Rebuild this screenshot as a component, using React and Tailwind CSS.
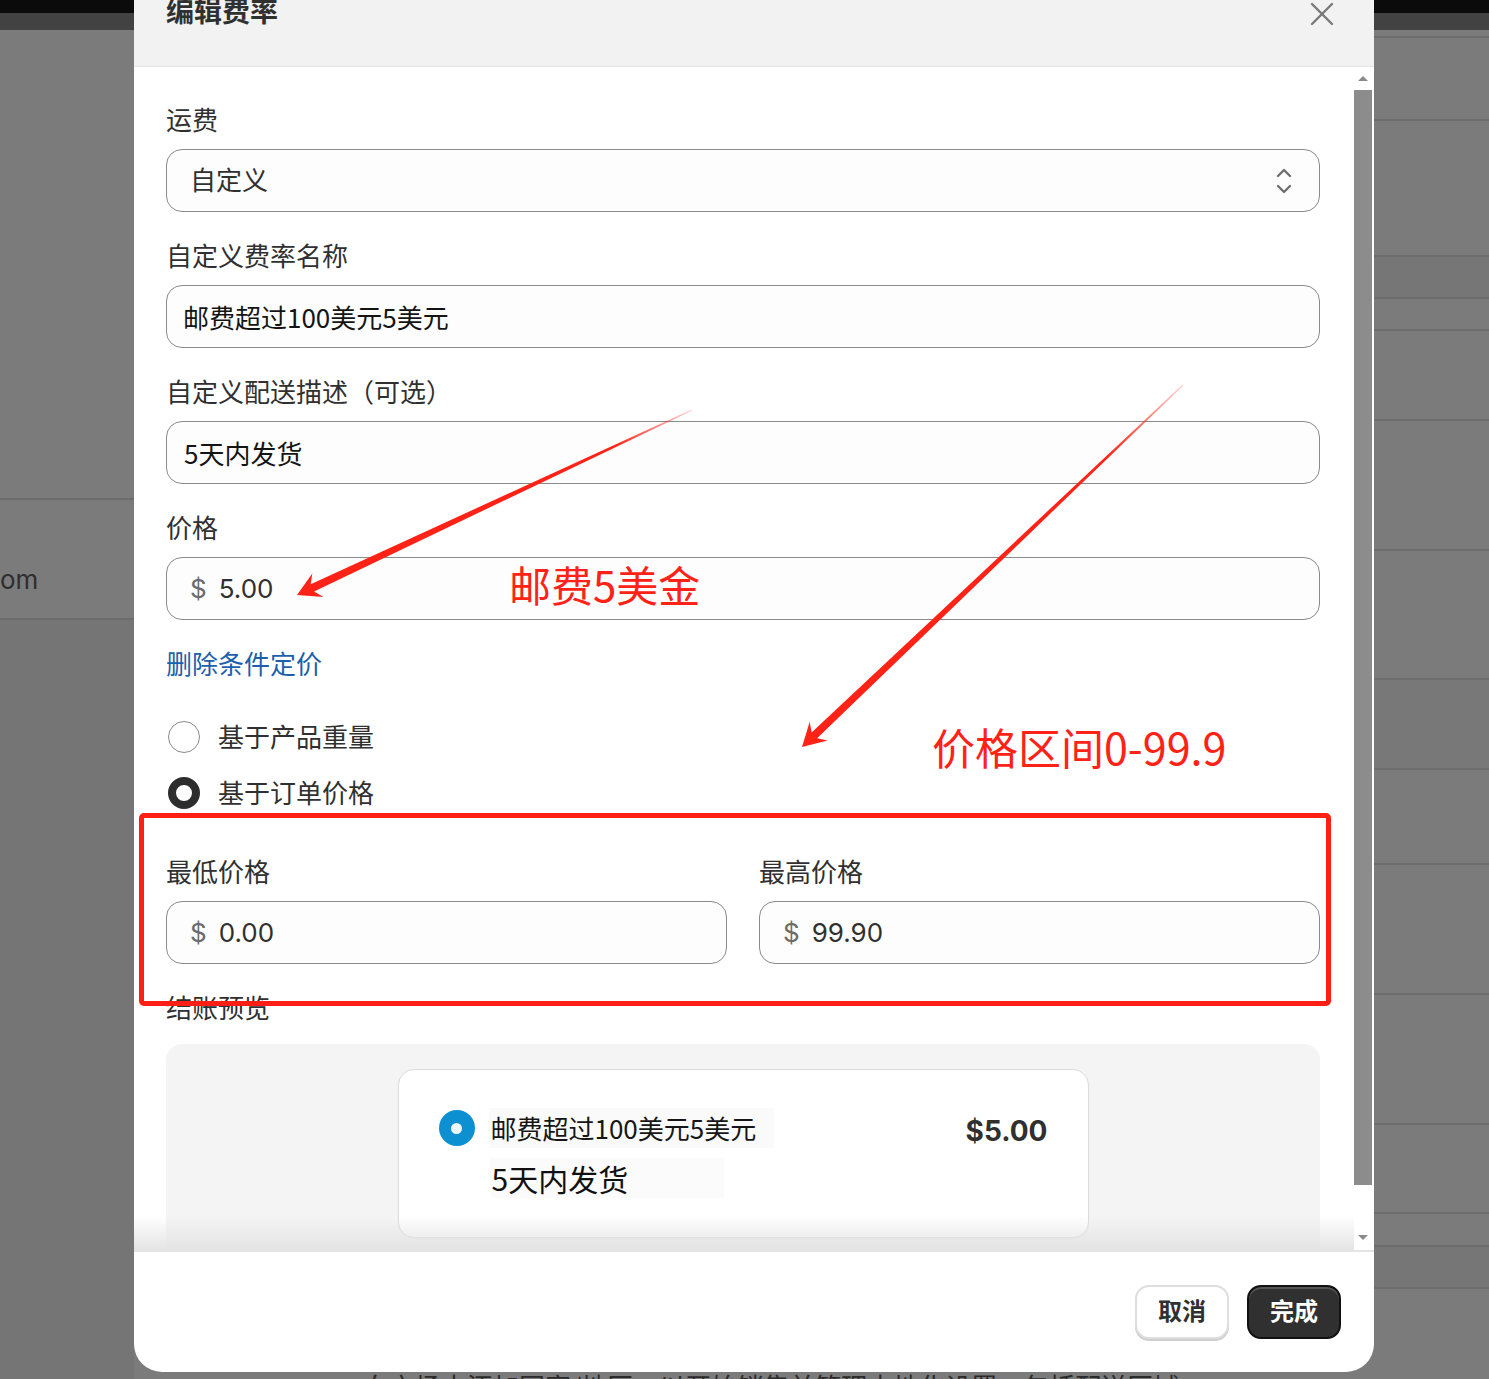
import React from 'react'

const UI = "font-['Inter','Noto_Sans_CJK_SC',sans-serif]"
const CJK = "font-['Noto_Sans_CJK_SC',sans-serif]"

// arrow outline: tip at (px,py), tail thin at (tx,ty)
function arrowPoints(tx, ty, px, py) {
  const dx = px - tx
  const dy = py - ty
  const len = Math.hypot(dx, dy)
  const ux = dx / len
  const uy = dy / len
  const nx = uy
  const ny = -ux
  const at = (a, w) => [px - ux * a + nx * w, py - uy * a + ny * w]
  const pts = [at(0, 0), at(23, 13), at(17, 4), at(len, 0.6), at(len, -0.6), at(17, -4), at(23, -13)]
  return pts.map((p) => p.map((v) => v.toFixed(1)).join(',')).join(' ')
}

const rightRows = [
  { h: 'h-[8px]', cls: '' },
  { h: 'h-[83px]', cls: '' },
  { h: 'h-[136px]', cls: '' },
  { h: 'h-[42px]', cls: 'bg-[#767676]' },
  { h: 'h-[32px]', cls: '' },
  { h: 'h-[90px]', cls: '' },
  { h: 'h-[130px]', cls: '' },
  { h: 'h-[129px]', cls: '' },
  { h: 'h-[90px]', cls: 'bg-[#787878]' },
  { h: 'h-[95px]', cls: '' },
  { h: 'h-[130px]', cls: '' },
  { h: 'h-[130px]', cls: '' },
  { h: 'h-[89px]', cls: '' },
  { h: 'h-[33px]', cls: '' },
  { h: 'h-[42px]', cls: 'bg-[#767676]' },
]

function Label({ children }) {
  return <div className="h-[36px] text-[26px] leading-[36px] text-[#303030]">{children}</div>
}

function Field({ children, className = '' }) {
  return (
    <div className={`mt-[10px] flex h-[63px] items-center rounded-[16px] border border-[#8a8a8a] bg-[#fdfdfd] ${className}`}>
      {children}
    </div>
  )
}

function Money({ value }) {
  return (
    <Field className="pl-[23px] text-[26px]">
      <span className="text-[#6b6b6b]">$</span>
      <span className="ml-[12px] text-[#303030]">{value}</span>
    </Field>
  )
}

function Modal() {
  return (
    <div className="absolute left-[134px] top-[-30px] flex w-[1240px] flex-col overflow-hidden rounded-b-[28px] bg-white">
      {/* header */}
      <div className="flex h-[97px] items-start justify-between border-b border-[#e3e3e3] bg-[#f2f2f2] pl-[32px] pr-[40px] pt-[24px]">
        <div className="text-[28px] font-bold leading-[36px] text-[#303030]">编辑费率</div>
        <svg className="mt-[8px]" width="24" height="24" viewBox="0 0 24 24" fill="none" stroke="#7a7a7a" strokeWidth="2.4" strokeLinecap="round">
          <path d="M2 2 22 22" />
          <path d="M22 2 2 22" />
        </svg>
      </div>

      {/* scroll body */}
      <div className="flex h-[1183px]">
        <div className="relative flex-1 overflow-hidden pl-[32px] pr-[34px] pt-[36px]">
          <Label>运费</Label>
          <Field className="justify-between pl-[23px] pr-[26px]">
            <span className="text-[26px] text-[#303030]">自定义</span>
            <svg width="18" height="28" viewBox="0 0 18 28" fill="none" stroke="#707070" strokeWidth="2.4" strokeLinecap="round" strokeLinejoin="round">
              <path d="M3 9 9 3 15 9" />
              <path d="M3 19 9 25 15 19" />
            </svg>
          </Field>

          <div className="mt-[27px]">
            <Label>自定义费率名称</Label>
          </div>
          <Field className="pl-[16px]">
            <span className={`${CJK} text-[26px] text-[#141414]`}>邮费超过100美元5美元</span>
          </Field>

          <div className="mt-[27px]">
            <Label>自定义配送描述（可选）</Label>
          </div>
          <Field className="pl-[17px]">
            <span className={`${CJK} text-[26px] text-[#141414]`}>5天内发货</span>
          </Field>

          <div className="mt-[27px]">
            <Label>价格</Label>
          </div>
          <Money value="5.00" />

          <div className="mt-[27px] h-[36px] text-[26px] leading-[36px] text-[#1d5fac]">删除条件定价</div>

          <div className="mt-[34px] flex h-[40px] items-center">
            <span className="ml-[2px] h-[32px] w-[32px] rounded-full border-[1.5px] border-[#8a8a8a] bg-white" />
            <span className="ml-[18px] text-[26px] text-[#303030]">基于产品重量</span>
          </div>
          <div className="mt-[16px] flex h-[40px] items-center">
            <span className="ml-[2px] h-[32px] w-[32px] rounded-full border-[8.5px] border-[#2d2d2d] bg-white" />
            <span className="ml-[18px] text-[26px] text-[#303030]">基于订单价格</span>
          </div>

          <div className="mt-[42px] grid grid-cols-2 gap-x-[32px]">
            <div>
              <Label>最低价格</Label>
              <Money value="0.00" />
            </div>
            <div>
              <Label>最高价格</Label>
              <Money value="99.90" />
            </div>
          </div>

          <div className="mt-[27px]">
            <Label>结账预览</Label>
          </div>

          <div className="mt-[17px] flex h-[400px] justify-center rounded-t-[16px] bg-[#f4f4f4] pt-[25px]">
            <div className="h-[169px] w-[691px] rounded-[16px] border border-[#dcdcdc] bg-white pl-[40px] pr-[40px] pt-[38px] shadow-[0_1px_2px_rgba(0,0,0,0.05)]">
              <div className="flex h-[40px] items-center">
                <span className="flex h-[36px] w-[36px] items-center justify-center rounded-full bg-[#0c90d2]">
                  <span className="h-[11px] w-[11px] rounded-full bg-[#eef6fb]" />
                </span>
                <span className={`${CJK} ml-[14px] bg-[#fafafa] px-[2px] pr-[18px] text-[26px] leading-[40px] text-[#161616]`}>邮费超过100美元5美元</span>
                <span className="ml-auto mt-[5px] text-[28px] font-bold text-[#303030]">$5.00</span>
              </div>
              <div className="mt-[10px] flex h-[40px] items-center pl-[51px]">
                <span className={`${CJK} bg-[#fbfbfb] px-[2px] pr-[96px] text-[30px] leading-[40px] text-[#111111]`}>5天内发货</span>
              </div>
            </div>
          </div>

          <div className="absolute bottom-0 left-0 right-0 h-[34px] bg-linear-to-b from-white/0 to-[#e4e4e4]" />
        </div>

        {/* scrollbar */}
        <div className="mr-[2px] flex w-[18px] flex-col items-center">
          <div className="flex h-[23px] w-full items-center justify-center">
            <span className="h-0 w-0 border-x-[5px] border-b-[5px] border-x-transparent border-b-[#8a8a8a]" />
          </div>
          <div className="h-[1095px] w-full bg-[#8c8c8c]" />
          <div className="flex flex-1 items-end justify-center pb-[10px]">
            <span className="h-0 w-0 border-x-[5px] border-t-[5px] border-x-transparent border-t-[#8a8a8a]" />
          </div>
        </div>
      </div>

      {/* footer */}
      <div className="flex h-[122px] items-center justify-end gap-[18px] border-t-2 border-[#e4e4e4] pr-[33px]">
        <button className="h-[54px] w-[94px] rounded-[14px] border-2 border-[#dedede] bg-white text-[24px] font-bold text-[#303030] shadow-[0_2px_0_#cfcfcf]">
          取消
        </button>
        <button className="h-[54px] w-[94px] rounded-[14px] border-2 border-[#111111] bg-[#303030] text-[24px] font-bold text-white shadow-[inset_0_2px_0_rgba(255,255,255,0.18)]">
          完成
        </button>
      </div>
    </div>
  )
}

function Annotations() {
  const a1 = arrowPoints(692, 410, 297, 595)
  const a2 = arrowPoints(1183, 385, 802, 747)
  return (
    <div className="pointer-events-none absolute inset-0">
      <svg className="absolute inset-0" width="1489" height="1379" viewBox="0 0 1489 1379">
        <defs>
          <linearGradient id="g1" gradientUnits="userSpaceOnUse" x1="692" y1="410" x2="613" y2="447">
            <stop offset="0" stopColor="#ff2216" stopOpacity="0.2" />
            <stop offset="1" stopColor="#ff2216" stopOpacity="1" />
          </linearGradient>
          <linearGradient id="g2" gradientUnits="userSpaceOnUse" x1="1183" y1="385" x2="1107" y2="457">
            <stop offset="0" stopColor="#ff2216" stopOpacity="0.2" />
            <stop offset="1" stopColor="#ff2216" stopOpacity="1" />
          </linearGradient>
        </defs>
        <polygon points={a1} fill="url(#g1)" />
        <polygon points={a2} fill="url(#g2)" />
      </svg>
      <div className={`${CJK} absolute left-[509px] top-[559px] text-[42px] leading-[50px] text-[#ff2216]`}>邮费5美金</div>
      <div className={`${CJK} absolute left-[932px] top-[721px] text-[43px] leading-[50px] text-[#ff2216]`}>价格区间0-99.9</div>
      <div className="absolute left-[139px] top-[813px] h-[193px] w-[1192px] rounded-[5px] border-[5px] border-[#ff1f14]" />
    </div>
  )
}

export default function App() {
  return (
    <div className={`${UI} relative h-[1379px] w-[1489px] overflow-hidden bg-[#7b7b7b]`}>
      {/* dimmed page behind the dialog */}
      <div className="h-[13px] bg-[#0b0b0b]" />
      <div className="h-[17px] bg-[#424242]" />
      <div className="flex">
        <div className="w-[134px] overflow-hidden">
          <div className="h-[470px] border-b-2 border-[#6c6c6c]" />
          <div className="h-[120px] border-b-2 border-[#6c6c6c] pt-[62px] text-[26px] leading-[36px] text-[#2e2e2e]">om</div>
          <div className="h-[800px] bg-[#757575]" />
        </div>
        <div className="flex-1 pl-[229px] pt-[1338px]">
          <div className={`${CJK} whitespace-nowrap text-[26px] leading-[36px] text-[#2a2a2a]`}>
            向市场中添加国家/地区，以开始销售并管理本地化设置，包括配送区域
          </div>
        </div>
        <div className="w-[115px]">
          {rightRows.map((r, i) => (
            <div key={i} className={`${r.h} ${r.cls} border-b-2 border-[#6d6d6d]`} />
          ))}
        </div>
      </div>

      <Modal />
      <Annotations />
    </div>
  )
}
